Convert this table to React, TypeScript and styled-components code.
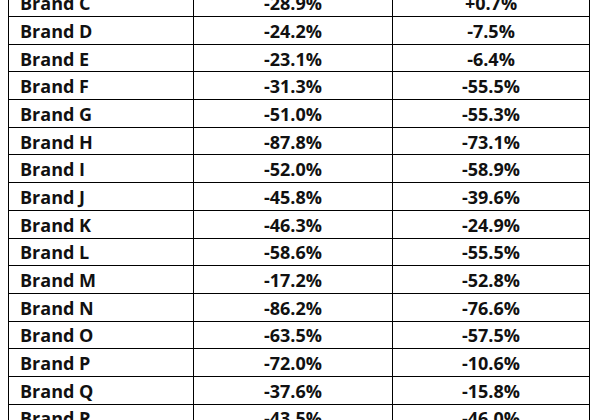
import React from "react";
import styled, { createGlobalStyle } from "styled-components";

const Global = createGlobalStyle`
  html, body { margin: 0; padding: 0; background: #fff; }
  body { width: 600px; height: 420px; overflow: hidden; }
`;

const Page = styled.div`
  padding-left: 8px;
  margin-top: -11.7px;
`;

const Table = styled.table`
  border-collapse: collapse;
  width: 581px;
  table-layout: fixed;
  font-family: "Open Sans", "Liberation Sans", sans-serif;
  font-weight: 700;
  font-size: 18px;
  color: #111;
`;

const Row = styled.tr`
  height: 27.7px;
`;

const Cell = styled.td<{ $align?: "left" | "center"; $w: number }>`
  width: ${(p) => p.$w}px;
  border: 1.5px solid #000;
  padding: 1px 0 0 ${(p) => (p.$align === "left" ? 11 : 0)}px;
  text-align: ${(p) => p.$align ?? "center"};
  line-height: 1;
  box-sizing: border-box;
  white-space: nowrap;
`;

const rows: [string, string, string][] = [
  ["Brand C", "-28.9%", "+0.7%"],
  ["Brand D", "-24.2%", "-7.5%"],
  ["Brand E", "-23.1%", "-6.4%"],
  ["Brand F", "-31.3%", "-55.5%"],
  ["Brand G", "-51.0%", "-55.3%"],
  ["Brand H", "-87.8%", "-73.1%"],
  ["Brand I", "-52.0%", "-58.9%"],
  ["Brand J", "-45.8%", "-39.6%"],
  ["Brand K", "-46.3%", "-24.9%"],
  ["Brand L", "-58.6%", "-55.5%"],
  ["Brand M", "-17.2%", "-52.8%"],
  ["Brand N", "-86.2%", "-76.6%"],
  ["Brand O", "-63.5%", "-57.5%"],
  ["Brand P", "-72.0%", "-10.6%"],
  ["Brand Q", "-37.6%", "-15.8%"],
  ["Brand R", "-43.5%", "-46.0%"],
];

export default function App() {
  return (
    <>
      <Global />
      <Page>
        <Table>
          <tbody>
            {rows.map(([b, a, c]) => (
              <Row key={b}>
                <Cell $align="left" $w={185}>{b}</Cell>
                <Cell $w={199}>{a}</Cell>
                <Cell $w={197}>{c}</Cell>
              </Row>
            ))}
          </tbody>
        </Table>
      </Page>
    </>
  );
}
